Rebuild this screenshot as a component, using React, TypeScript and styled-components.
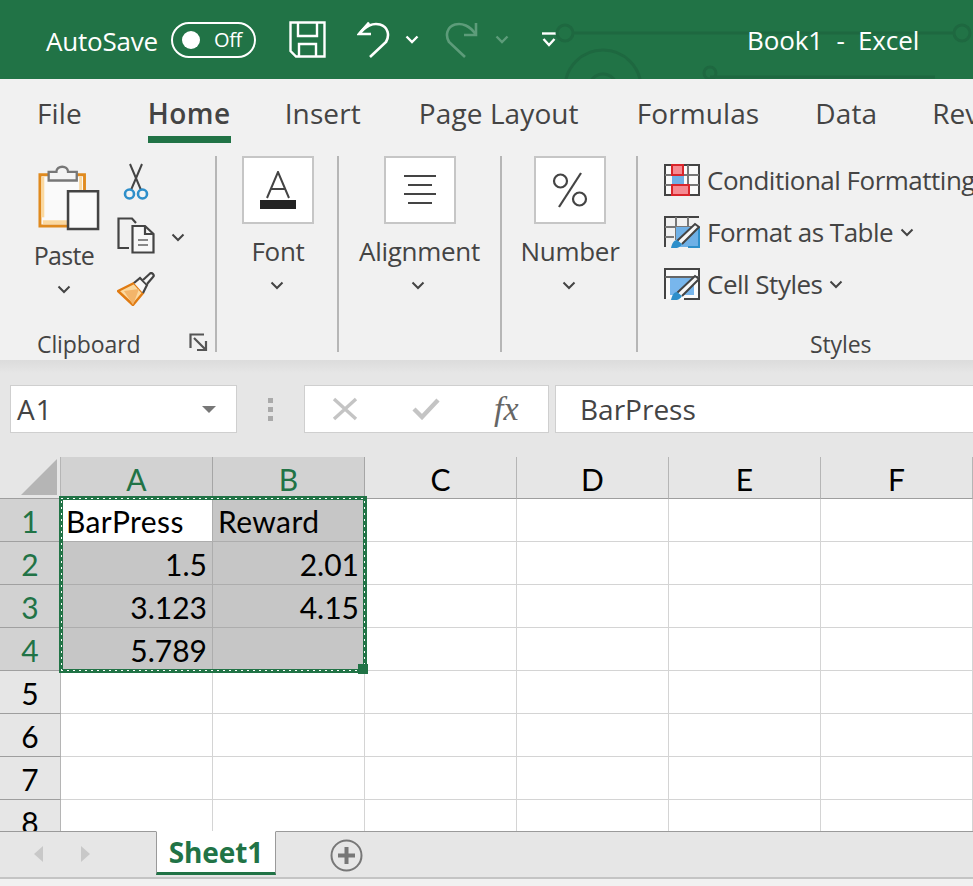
import React from 'react'
import styled, { createGlobalStyle } from 'styled-components'

const green = '#217346'
const uiFont = `"Open Sans", "Noto Sans", sans-serif`
const cellFont = `Lato, "Liberation Sans", sans-serif`

const GlobalStyle = createGlobalStyle`
  html, body { margin: 0; padding: 0; background: #fff; }
  #root { width: 973px; height: 886px; overflow: hidden; }
`

const Window = styled.div`
  width: 973px;
  height: 886px;
  display: flex;
  flex-direction: column;
  overflow: hidden;
  font-family: ${uiFont};
  color: #444;
`

/* title bar */
const TitleBar = styled.header`
  position: relative;
  flex: 0 0 79px;
  display: flex;
  align-items: center;
  background: ${green};
  color: #fff;
  padding-left: 46px;
  overflow: hidden;
`

const Circuit = styled.svg`
  position: absolute;
  left: 540px;
  top: 0;
`

const AutoSave = styled.span`
  font-size: 26px;
  letter-spacing: -0.2px;
  position: relative;
  top: 1px;
  width: 125px;
`

const Toggle = styled.div`
  box-sizing: border-box;
  width: 85px;
  height: 36px;
  border: 2px solid #fff;
  border-radius: 18px;
  display: flex;
  align-items: center;
  padding-left: 9px;
  font-size: 20px;
  letter-spacing: -0.4px;
  margin-right: 33px;

  &::before {
    content: '';
    width: 18px;
    height: 18px;
    border-radius: 50%;
    background: #fff;
    margin-right: 14px;
  }
`

const QatIcon = styled.svg<{ $gap?: number }>`
  flex: none;
  margin-right: ${p => p.$gap ?? 0}px;
`

const Title = styled.span`
  position: absolute;
  left: 747px;
  top: 22px;
  font-size: 26px;
  letter-spacing: -0.1px;
  line-height: 36px;
  white-space: pre;
`

/* ribbon tabs */
const TabRow = styled.nav`
  flex: 0 0 66px;
  display: flex;
  background: #f1f1f1;
  padding-left: 37px;
  box-sizing: border-box;
  white-space: nowrap;
`

const Tab = styled.div<{ $active?: boolean; $gap: number }>`
  height: 64px;
  margin-right: ${p => p.$gap}px;
  padding-top: 14px;
  box-sizing: border-box;
  font-size: 28px;
  line-height: 40px;
  letter-spacing: ${p => (p.$active ? '0.5px' : '0.1px')};
  font-weight: ${p => (p.$active ? 600 : 400)};
  border-bottom: ${p => (p.$active ? `7px solid ${green}` : 'none')};
`

/* ribbon body */
const Ribbon = styled.section`
  flex: 0 0 215px;
  display: flex;
  background: #f1f1f1;
  padding-top: 11px;
  box-sizing: border-box;
  overflow: hidden;
`

const Group = styled.div<{ $width: number; $inset?: number }>`
  position: relative;
  flex: 0 0 ${p => p.$width}px;
  height: 196px;
  box-sizing: border-box;
  padding-left: ${p => p.$inset ?? 0}px;
  display: flex;
  flex-direction: column;
  align-items: center;
`

const Divider = styled.div`
  flex: 0 0 2px;
  height: 196px;
  background: #b6b6b6;
`

const IconBox = styled.div`
  box-sizing: border-box;
  width: 72px;
  height: 68px;
  background: #fff;
  border: 2px solid #c6c6c6;
  display: flex;
  align-items: center;
  justify-content: center;
`

const GroupName = styled.div`
  font-size: 26px;
  line-height: 34px;
  letter-spacing: -0.3px;
  margin: 10px 0 13px;
  white-space: nowrap;
`

const GroupChevron = styled.div`
  margin-right: 3px;
`

const Chevron = styled.svg`
  display: block;
  flex: none;
`

const ClipboardBody = styled.div`
  display: grid;
  grid-template-columns: 113px 46px 56px;
  grid-template-rows: 51px 56px 51px;
  width: 215px;
  height: 158px;
`

const PasteCell = styled.div`
  grid-row: 1 / 4;
  display: flex;
  flex-direction: column;
  align-items: center;
  padding: 7px 0 0 15px;
  box-sizing: border-box;
`

const PasteIconWrap = styled.div`
  margin-left: 10px;
  height: 68px;
`

const PasteLabel = styled.div`
  font-size: 25px;
  line-height: 34px;
  letter-spacing: -0.65px;
  margin: 7px 0 13px;
`

const ToolCell = styled.div`
  grid-column: 2;
  display: flex;
  justify-content: center;
  align-items: center;
`

const ChevCell = styled.div`
  grid-column: 3;
  grid-row: 2;
  display: flex;
  align-items: center;
  padding: 4px 0 0 12px;
`

const GroupFooter = styled.div<{ $left: number }>`
  position: absolute;
  left: ${p => p.$left}px;
  bottom: -9px;
  font-size: 23px;
  line-height: 34px;
  letter-spacing: -0.1px;
`

const Launcher = styled.svg`
  position: absolute;
  left: 189px;
  bottom: 0;
`

const StylesGroup = styled(Group)`
  align-items: flex-start;
  gap: 4px;
`

const StyleRow = styled.div`
  height: 48px;
  display: flex;
  align-items: center;
  font-size: 26px;
  letter-spacing: -0.5px;
  white-space: nowrap;
  gap: 7px;
`

/* shadow under the ribbon + formula bar */
const FormulaArea = styled.div`
  flex: 0 0 97px;
  box-sizing: border-box;
  background: linear-gradient(#dcdcdc 0, #e0e0e0 6px, #e6e6e6 13px);
  padding: 25px 0 0 10px;
  display: flex;
  align-items: flex-start;
  white-space: nowrap;
`

const Field = styled.div`
  box-sizing: border-box;
  height: 48px;
  background: #fff;
  border: 1px solid #cfcfcf;
  display: flex;
  align-items: center;
  font-size: 28px;
`

const NameBox = styled(Field)`
  flex: 0 0 227px;
  padding: 0 20px 0 6px;
  justify-content: space-between;
  letter-spacing: 1px;
`

const Caret = styled.div`
  width: 0;
  height: 0;
  border-left: 7px solid transparent;
  border-right: 7px solid transparent;
  border-top: 7px solid #777;
`

const Grip = styled.div`
  flex: 0 0 67px;
  height: 48px;
  display: flex;
  flex-direction: column;
  align-items: center;
  justify-content: center;
  gap: 4px;

  span {
    width: 5px;
    height: 5px;
    background: #aaa;
  }
`

const FormulaButtons = styled(Field)`
  flex: 0 0 245px;
  margin-right: 6px;
  padding-left: 27px;
  gap: 54px;
`

const Fx = styled.span`
  font-family: "Liberation Serif", serif;
  font-style: italic;
  font-size: 34px;
  color: #666;
  line-height: 40px;
`

const FormulaInput = styled(Field)`
  flex: 1;
  padding-left: 24px;
  border-right: none;
`

/* sheet */
const Sheet = styled.div`
  position: relative;
  flex: 0 0 374px;
  display: grid;
  grid-template-columns: 61px repeat(6, 152px);
  grid-auto-rows: 43px;
  grid-template-rows: 42px;
  overflow: hidden;
  background: #fff;
  font-family: ${cellFont};
  color: #000;
`

const Corner = styled.div`
  background: #e6e6e6;
  border-right: 1px solid #b5b5b5;
  border-bottom: 1px solid #9e9e9e;
  box-sizing: border-box;
  display: flex;
  align-items: flex-end;
  justify-content: flex-end;
  padding: 0 3px 3px 0;
`

const Head = styled.div<{ $on?: boolean }>`
  box-sizing: border-box;
  background: ${p => (p.$on ? '#d2d2d2' : '#e6e6e6')};
  color: ${p => (p.$on ? green : '#000')};
  border-right: 1px solid ${p => (p.$on ? '#a6a6a6' : '#b5b5b5')};
  border-bottom: 1px solid ${p => (p.$on ? '#a0a0a0' : '#9e9e9e')};
  font-size: 30px;
  display: flex;
  align-items: center;
  justify-content: center;
  padding-top: 2px;
`

const Cell = styled.div<{ $on?: boolean; $active?: boolean; $num?: boolean }>`
  box-sizing: border-box;
  background: ${p => (p.$active ? '#fff' : p.$on ? '#c6c6c6' : '#fff')};
  border-right: 1px solid ${p => (p.$on ? '#adadad' : '#d4d4d4')};
  border-bottom: 1px solid ${p => (p.$on ? '#adadad' : '#d4d4d4')};
  font-size: 30px;
  letter-spacing: ${p => (p.$num ? '0' : '0.4px')};
  display: flex;
  align-items: center;
  justify-content: ${p => (p.$num ? 'flex-end' : 'flex-start')};
  padding: 2px 5px 0 5px;
`

const Selection = styled.div`
  position: absolute;
  left: 59px;
  top: 39px;
  width: 308px;
  height: 177px;
  box-sizing: border-box;
  border: 4px solid ${green};
  pointer-events: none;

  /* marching ants running down the middle of the border */
  &::before {
    content: '';
    position: absolute;
    inset: -2px;
    background:
      repeating-linear-gradient(90deg, #fff 0 2px, transparent 2px 6px) top / 100% 1px no-repeat,
      repeating-linear-gradient(90deg, #fff 0 2px, transparent 2px 6px) bottom / 100% 1px no-repeat,
      repeating-linear-gradient(0deg, #fff 0 2px, transparent 2px 6px) left / 1px 100% no-repeat,
      repeating-linear-gradient(0deg, #fff 0 2px, transparent 2px 6px) right / 1px 100% no-repeat;
  }
`

const Handle = styled.div`
  position: absolute;
  right: -5px;
  bottom: -5px;
  width: 10px;
  height: 10px;
  background: ${green};
`

/* bottom tabs */
const SheetBar = styled.footer`
  flex: 0 0 48px;
  box-sizing: border-box;
  background: #e6e6e6;
  border-top: 1px solid #9a9a9a;
  border-bottom: 2px solid #c4c4c4;
  display: flex;
  align-items: flex-start;
  padding-left: 33px;
`

const SheetTab = styled.div`
  box-sizing: border-box;
  flex: 0 0 120px;
  height: 44px;
  margin: -1px 54px 0 65px;
  background: #fff;
  border: 1px solid #9a9a9a;
  border-top-color: #fff;
  border-bottom: 3px solid ${green};
  color: ${green};
  font-size: 28px;
  font-weight: 700;
  letter-spacing: -0.1px;
  display: flex;
  align-items: center;
  justify-content: center;
`

const ArrowIcon = styled.svg<{ $gap?: number }>`
  flex: none;
  margin: 13px 0 0 ${p => p.$gap ?? 0}px;
`

const AddIcon = styled.svg`
  flex: none;
  margin-top: 7px;
`

const StatusStrip = styled.div`
  flex: 1;
  background: #f1f1f1;
`

const Save = () => (
  <QatIcon $gap={31} width="37" height="37" viewBox="0 0 37 37" fill="none" stroke="#fff" strokeWidth="2.4">
    <path d="M1.5 1.5H35.5V35.5H7L1.5 30Z" />
    <path d="M9 1.5V15H28V1.5" />
    <path d="M10 35.5V23H27V35.5" />
  </QatIcon>
)

const Undo = () => (
  <QatIcon $gap={15} width="33" height="37" viewBox="0 0 33 37" fill="none" stroke="#fff" strokeWidth="2.6">
    <path d="M12 1.5L2 13H14" />
    <path d="M2.5 13C8 5 16 1.5 23 3.5C31 6 33 14 29 21L13 36" />
  </QatIcon>
)

const Redo = () => (
  <QatIcon $gap={17} width="33" height="37" viewBox="0 0 33 37" fill="none" stroke="#5d9c7a" strokeWidth="2.6">
    <path d="M31 2V14H19" />
    <path d="M30.5 13C25 5 17 1.5 10 3.5C2 6 0 14 4 21L20 36" />
  </QatIcon>
)

const SmallChevron = ({ color = '#fff', gap = 0 }: { color?: string; gap?: number }) => (
  <QatIcon $gap={gap} width="14" height="9" viewBox="0 0 14 9" fill="none" stroke={color} strokeWidth="2.4">
    <path d="M1.5 1.5L7 7L12.5 1.5" />
  </QatIcon>
)

const Down = () => (
  <Chevron width="14" height="9" viewBox="0 0 14 9" fill="none" stroke="#444" strokeWidth="2">
    <path d="M1.5 1.5L7 7L12.5 1.5" />
  </Chevron>
)

const PasteIcon = () => (
  <svg width="62" height="68" viewBox="0 0 64 68" fill="none">
    <path d="M2 11H48V64H2Z" fill="#fafafa" stroke="#e08a1e" strokeWidth="3" />
    <path d="M5 55V13" stroke="#fbd9a0" strokeWidth="3" />
    <path d="M5 60H30" stroke="#fbd9a0" strokeWidth="4" />
    <path d="M44 13V30" stroke="#fbd9a0" strokeWidth="3" />
    <path d="M11 17V8H19C19 1 31 1 31 8H40V17Z" fill="#f4f4f4" stroke="#777" strokeWidth="2.4" />
    <path d="M31 28H62V67H31Z" fill="#fafafa" stroke="#444" strokeWidth="2.6" />
  </svg>
)

const Scissors = () => (
  <svg width="26" height="38" viewBox="0 0 26 38" fill="none">
    <path d="M7 1L18 27M19 1L8 27" stroke="#444" strokeWidth="2" />
    <circle cx="6.5" cy="31" r="4.5" stroke="#2e8fca" strokeWidth="2.6" fill="#f4f4f4" />
    <circle cx="19.5" cy="31" r="4.5" stroke="#2e8fca" strokeWidth="2.6" fill="#f4f4f4" />
  </svg>
)

const Copy = () => (
  <svg width="38" height="37" viewBox="0 0 38 37" fill="none" stroke="#444" strokeWidth="2.2">
    <path d="M12 31H1.5V1.5H15L19 6" />
    <path d="M15.5 9H28L36.5 17V35.5H15.5Z" fill="#f7f7f7" />
    <path d="M28 9V17H36.5" />
    <path d="M21 23H31M21 28H31" stroke="#888" />
  </svg>
)

const Brush = () => (
  <svg width="38" height="34" viewBox="0 0 38 34" fill="none">
    <path d="M1 19L17 11L26 21L16 33Z" fill="#fbd9a0" stroke="#e07b12" strokeWidth="2.4" strokeLinejoin="round" />
    <path d="M7 19L22 17L16 33Z" fill="#f3b56a" />
    <path d="M17 11L23 6L30 13L26 21" fill="#f7f7f7" stroke="#444" strokeWidth="2.2" />
    <path d="M26 8L33 1.5C35 0 38 3 36 5L30 12" fill="#f7f7f7" stroke="#444" strokeWidth="2.2" />
  </svg>
)

const CondFormat = () => (
  <svg width="36" height="32" viewBox="0 0 36 32" fill="none" stroke="#444" strokeWidth="2">
    <path d="M1 1H35V31H1Z" fill="#fafafa" />
    <path d="M12 1V31M24 1V31M1 11H35M1 21H35" stroke="#777" />
    <rect x="8" y="10" width="12" height="11" fill="#6fb0e6" stroke="none" />
    <rect x="8" y="1" width="11" height="10" fill="#f58a92" stroke="#d9252b" />
    <rect x="8" y="21" width="17" height="10" fill="#f58a92" stroke="#d9252b" />
  </svg>
)

const PaintOverlay = () => (
  <>
    <path d="M13 25L31 8L35 11L18 28" fill="#f7f7f7" stroke="#444" strokeWidth="2" />
    <path d="M7 32C8 27 10 24 13 24L18 28C16 32 11 33 7 32Z" fill="#2e8fca" stroke="none" />
  </>
)

const TableIcon = () => (
  <svg width="36" height="32" viewBox="0 0 36 32" fill="none" stroke="#444" strokeWidth="2">
    <path d="M1 31V1H35" />
    <path d="M12 1V24M24 1V12M1 11H35M1 21H10" stroke="#777" />
    <path d="M12 11H35V31H12Z" fill="#6fb0e6" stroke="none" />
    <path d="M35 11V31H24" stroke="#2e8fca" />
    <PaintOverlay />
  </svg>
)

const CellStylesIcon = () => (
  <svg width="36" height="32" viewBox="0 0 36 32" fill="none" stroke="#444" strokeWidth="2">
    <path d="M1 31V1H35V31H20" fill="#fafafa" />
    <path d="M1 9H35" stroke="#666" />
    <path d="M6 10H30V27H6Z" fill="#78b6ec" stroke="none" />
    <PaintOverlay />
  </svg>
)

const cols = ['A', 'B', 'C', 'D', 'E', 'F']
const rows: string[][] = [
  ['BarPress', 'Reward'],
  ['1.5', '2.01'],
  ['3.123', '4.15'],
  ['5.789', ''],
  [],
  [],
  [],
  [],
]

export default function App() {
  return (
    <Window>
      <GlobalStyle />
      <TitleBar>
        <Circuit width="433" height="79" viewBox="0 0 433 79" fill="none" stroke="#1e6840" strokeWidth="3">
          <circle cx="25" cy="33" r="8" />
          <circle cx="422" cy="33" r="8" />
          <path d="M33 33H414" />
          <circle cx="63" cy="88" r="38" />
          <circle cx="63" cy="88" r="14" />
          <circle cx="170" cy="73" r="6" />
          <path d="M170 77H395" />
        </Circuit>
        <AutoSave>AutoSave</AutoSave>
        <Toggle>Off</Toggle>
        <Save />
        <Undo />
        <SmallChevron gap={26} />
        <Redo />
        <SmallChevron color="#5d9c7a" gap={32} />
        <QatIcon width="16" height="16" viewBox="0 0 16 16" fill="none" stroke="#fff" strokeWidth="2.4">
          <path d="M1 1.5H15" />
          <path d="M2.5 7L8 13L13.5 7" />
        </QatIcon>
        <Title>Book1  -  Excel</Title>
      </TitleBar>

      <TabRow>
        <Tab $gap={66}>File</Tab>
        <Tab $gap={54} $active>Home</Tab>
        <Tab $gap={58}>Insert</Tab>
        <Tab $gap={58}>Page Layout</Tab>
        <Tab $gap={56}>Formulas</Tab>
        <Tab $gap={55}>Data</Tab>
        <Tab $gap={0}>Review</Tab>
      </TabRow>

      <Ribbon>
        <Group $width={215}>
          <ClipboardBody>
            <PasteCell>
              <PasteIconWrap><PasteIcon /></PasteIconWrap>
              <PasteLabel>Paste</PasteLabel>
              <Down />
            </PasteCell>
            <ToolCell><Scissors /></ToolCell>
            <ToolCell><Copy /></ToolCell>
            <ChevCell><Down /></ChevCell>
            <ToolCell><Brush /></ToolCell>
          </ClipboardBody>
          <GroupFooter $left={37}>Clipboard</GroupFooter>
          <Launcher width="19" height="19" viewBox="0 0 19 19" fill="none" stroke="#555" strokeWidth="2.2">
            <path d="M1.5 15V1.5H15" />
            <path d="M5 5L17 17M17 8V17H8" />
          </Launcher>
        </Group>
        <Divider />
        <Group $width={120} $inset={2}>
          <IconBox>
            <svg width="38" height="38" viewBox="0 0 38 38">
              <path d="M8 27L19 1L30 27M12 18H26" fill="none" stroke="#444" strokeWidth="2" />
              <rect x="1" y="29" width="36" height="9" fill="#222" />
            </svg>
          </IconBox>
          <GroupName>Font</GroupName>
          <GroupChevron><Down /></GroupChevron>
        </Group>
        <Divider />
        <Group $width={161}>
          <IconBox>
            <svg width="34" height="32" viewBox="0 0 34 32" stroke="#444" strokeWidth="2.2">
              <path d="M1 2H33M5 11H29M1 20H33M5 29H29" />
            </svg>
          </IconBox>
          <GroupName>Alignment</GroupName>
          <GroupChevron><Down /></GroupChevron>
        </Group>
        <Divider />
        <Group $width={134} $inset={2}>
          <IconBox>
            <svg width="36" height="36" viewBox="0 0 36 36" fill="none" stroke="#444" strokeWidth="2.2">
              <circle cx="8.5" cy="9" r="6.5" />
              <circle cx="27.5" cy="27" r="6.5" />
              <path d="M29 1L7 35" />
            </svg>
          </IconBox>
          <GroupName>Number</GroupName>
          <GroupChevron><Down /></GroupChevron>
        </Group>
        <Divider />
        <StylesGroup $width={335} $inset={26}>
          <StyleRow><CondFormat />Conditional Formatting</StyleRow>
          <StyleRow><TableIcon />Format as Table<Down /></StyleRow>
          <StyleRow><CellStylesIcon />Cell Styles<Down /></StyleRow>
          <GroupFooter $left={172}>Styles</GroupFooter>
        </StylesGroup>
      </Ribbon>

      <FormulaArea>
        <NameBox>A1<Caret /></NameBox>
        <Grip><span /><span /><span /></Grip>
        <FormulaButtons>
          <svg width="26" height="24" viewBox="0 0 26 24" stroke="#c4c4c4" strokeWidth="3.4">
            <path d="M2 2L24 22M24 2L2 22" />
          </svg>
          <svg width="28" height="22" viewBox="0 0 28 22" fill="none" stroke="#c4c4c4" strokeWidth="4.4">
            <path d="M2 11L10 19L26 2" />
          </svg>
          <Fx>fx</Fx>
        </FormulaButtons>
        <FormulaInput>BarPress</FormulaInput>
      </FormulaArea>

      <Sheet>
        <Corner>
          <svg width="36" height="36" viewBox="0 0 36 36"><path d="M36 0V36H0Z" fill="#b5b5b5" /></svg>
        </Corner>
        {cols.map((c, i) => (
          <Head key={c} $on={i < 2}>{c}</Head>
        ))}
        {rows.map((row, r) => (
          <React.Fragment key={r}>
            <Head $on={r < 4}>{r + 1}</Head>
            {cols.map((c, i) => {
              const v = row[i] ?? ''
              return (
                <Cell
                  key={c}
                  $on={r < 4 && i < 2}
                  $active={r === 0 && i === 0}
                  $num={r > 0}
                >
                  {v}
                </Cell>
              )
            })}
          </React.Fragment>
        ))}
        <Selection><Handle /></Selection>
      </Sheet>

      <SheetBar>
        <ArrowIcon width="12" height="18" viewBox="0 0 12 18"><path d="M10 1V17L1 9Z" fill="#c8c8c8" /></ArrowIcon>
        <ArrowIcon $gap={34} width="12" height="18" viewBox="0 0 12 18"><path d="M2 1V17L11 9Z" fill="#c8c8c8" /></ArrowIcon>
        <SheetTab>Sheet1</SheetTab>
        <AddIcon width="33" height="33" viewBox="0 0 33 33" fill="none" stroke="#777">
          <circle cx="16.5" cy="16.5" r="15" strokeWidth="2" />
          <path d="M16.5 8V25M8 16.5H25" strokeWidth="4" />
        </AddIcon>
      </SheetBar>
      <StatusStrip />
    </Window>
  )
}
